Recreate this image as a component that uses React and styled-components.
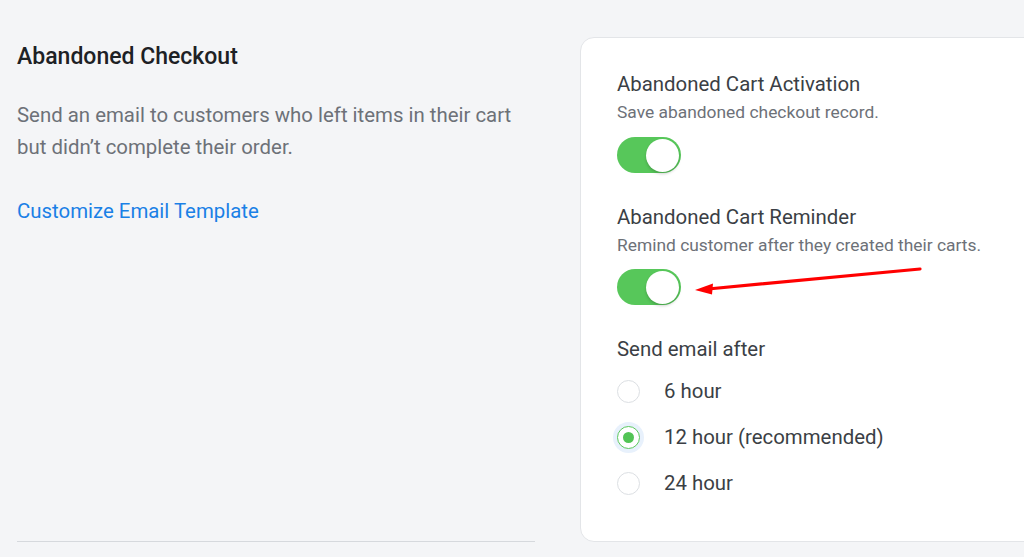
import React, { useState } from 'react';
import styled, { createGlobalStyle } from 'styled-components';

const GlobalStyle = createGlobalStyle`
  html, body {
    margin: 0;
    padding: 0;
    background: #f4f5f7;
    font-family: Roboto, "Liberation Sans", Arial, sans-serif;
    overflow: hidden;
  }
  * { box-sizing: border-box; }
`;

const options = [
  { id: '6', label: '6 hour' },
  { id: '12', label: '12 hour (recommended)' },
  { id: '24', label: '24 hour' },
];

const App = () => {
  const [activation, setActivation] = useState(true);
  const [reminder, setReminder] = useState(true);
  const [after, setAfter] = useState('12');

  return (
    <>
      <GlobalStyle />
      <Page>
        <Intro>
          <Title>Abandoned Checkout</Title>
          <Description>
            Send an email to customers who left items in their cart but didn’t complete their order.
          </Description>
          <LinkText href="#">Customize Email Template</LinkText>
        </Intro>

        <Card>
          <Setting>
            <SettingTitle>Abandoned Cart Activation</SettingTitle>
            <SettingHint>Save abandoned checkout record.</SettingHint>
            <ToggleRow>
              <Toggle $on={activation} onClick={() => setActivation(!activation)}>
                <Knob $on={activation} />
              </Toggle>
            </ToggleRow>
          </Setting>

          <Setting $gap="31px">
            <SettingTitle>Abandoned Cart Reminder</SettingTitle>
            <SettingHint>Remind customer after they created their carts.</SettingHint>
            <ToggleRow $top="12px">
              <Toggle $on={reminder} onClick={() => setReminder(!reminder)}>
                <Knob $on={reminder} />
              </Toggle>
              <Arrow width="240" height="40" viewBox="0 0 240 40">
                <line x1="230" y1="10" x2="18" y2="30" stroke="#f00" strokeWidth="3.2" strokeLinecap="round" />
                <polygon points="5,31 23,24.5 22,35.5" fill="#f00" />
              </Arrow>
            </ToggleRow>
          </Setting>

          <Setting $gap="31px">
            <SettingTitle>Send email after</SettingTitle>
            <RadioGroup>
              {options.map((o) => (
                <RadioRow key={o.id} onClick={() => setAfter(o.id)}>
                  <Radio $checked={after === o.id} />
                  <RadioLabel>{o.label}</RadioLabel>
                </RadioRow>
              ))}
            </RadioGroup>
          </Setting>
        </Card>
      </Page>
    </>
  );
};

export default App;

const Page = styled.div`
  display: flex;
  align-items: stretch;
  padding: 37px 0 0 17px;
  width: 1100px;
`;

const Intro = styled.div`
  width: 518px;
  padding-top: 6px;
  border-bottom: 1px solid #d6d9dd;
  margin-right: 45px;
`;

const Title = styled.h2`
  margin: 0;
  font-size: 23px;
  line-height: 28px;
  font-weight: 500;
  color: #1d2125;
`;

const Description = styled.p`
  margin: 28px 0 0;
  font-size: 20.4px;
  line-height: 32px;
  color: #6d7178;
`;

const LinkText = styled.a`
  display: block;
  margin-top: 32px;
  font-size: 20.4px;
  line-height: 32px;
  color: #1a80e6;
  text-decoration: none;
`;

const Card = styled.div`
  width: 480px;
  background: #fff;
  border: 1px solid #e3e5e8;
  border-radius: 14px;
  padding: 33px 36px 35px;
`;

const Setting = styled.div`
  margin-top: ${(p) => p.$gap || '0'};
`;

const SettingTitle = styled.div`
  font-size: 20.4px;
  line-height: 26px;
  color: #3b3f45;
`;

const SettingHint = styled.div`
  margin-top: 3px;
  font-size: 17.4px;
  line-height: 24px;
  color: #6d7178;
`;

const ToggleRow = styled.div`
  position: relative;
  margin-top: ${(p) => p.$top || '13px'};
  height: 36px;
`;

const Toggle = styled.div`
  width: 64px;
  height: 36px;
  border-radius: 18px;
  background: ${(p) => (p.$on ? '#57c75a' : '#dcdfe3')};
  position: relative;
  cursor: pointer;
`;

const Knob = styled.div`
  position: absolute;
  top: 2px;
  left: ${(p) => (p.$on ? '29px' : '2px')};
  width: 33px;
  height: 33px;
  border-radius: 50%;
  background: #fff;
  box-shadow: 0 2px 3px rgba(0, 0, 0, 0.18);
`;

const Arrow = styled.svg`
  position: absolute;
  left: 73px;
  top: -10px;
`;

const RadioGroup = styled.div`
  margin-top: 6px;
  display: flex;
  flex-direction: column;
`;

const RadioRow = styled.div`
  display: flex;
  align-items: center;
  height: 46px;
  cursor: pointer;
`;

const Radio = styled.span`
  width: 23px;
  height: 23px;
  border-radius: 50%;
  background: #fff;
  border: 1px solid ${(p) => (p.$checked ? '#5cc85e' : '#dcdfe3')};
  box-shadow: ${(p) => (p.$checked ? '0 0 0 4px #e8f1fc' : 'none')};
  display: flex;
  align-items: center;
  justify-content: center;
  &::after {
    content: '';
    width: 11px;
    height: 11px;
    border-radius: 50%;
    background: #52c455;
    display: ${(p) => (p.$checked ? 'block' : 'none')};
  }
`;

const RadioLabel = styled.span`
  margin-left: 24px;
  font-size: 20.4px;
  line-height: 26px;
  color: #3b3f45;
`;
